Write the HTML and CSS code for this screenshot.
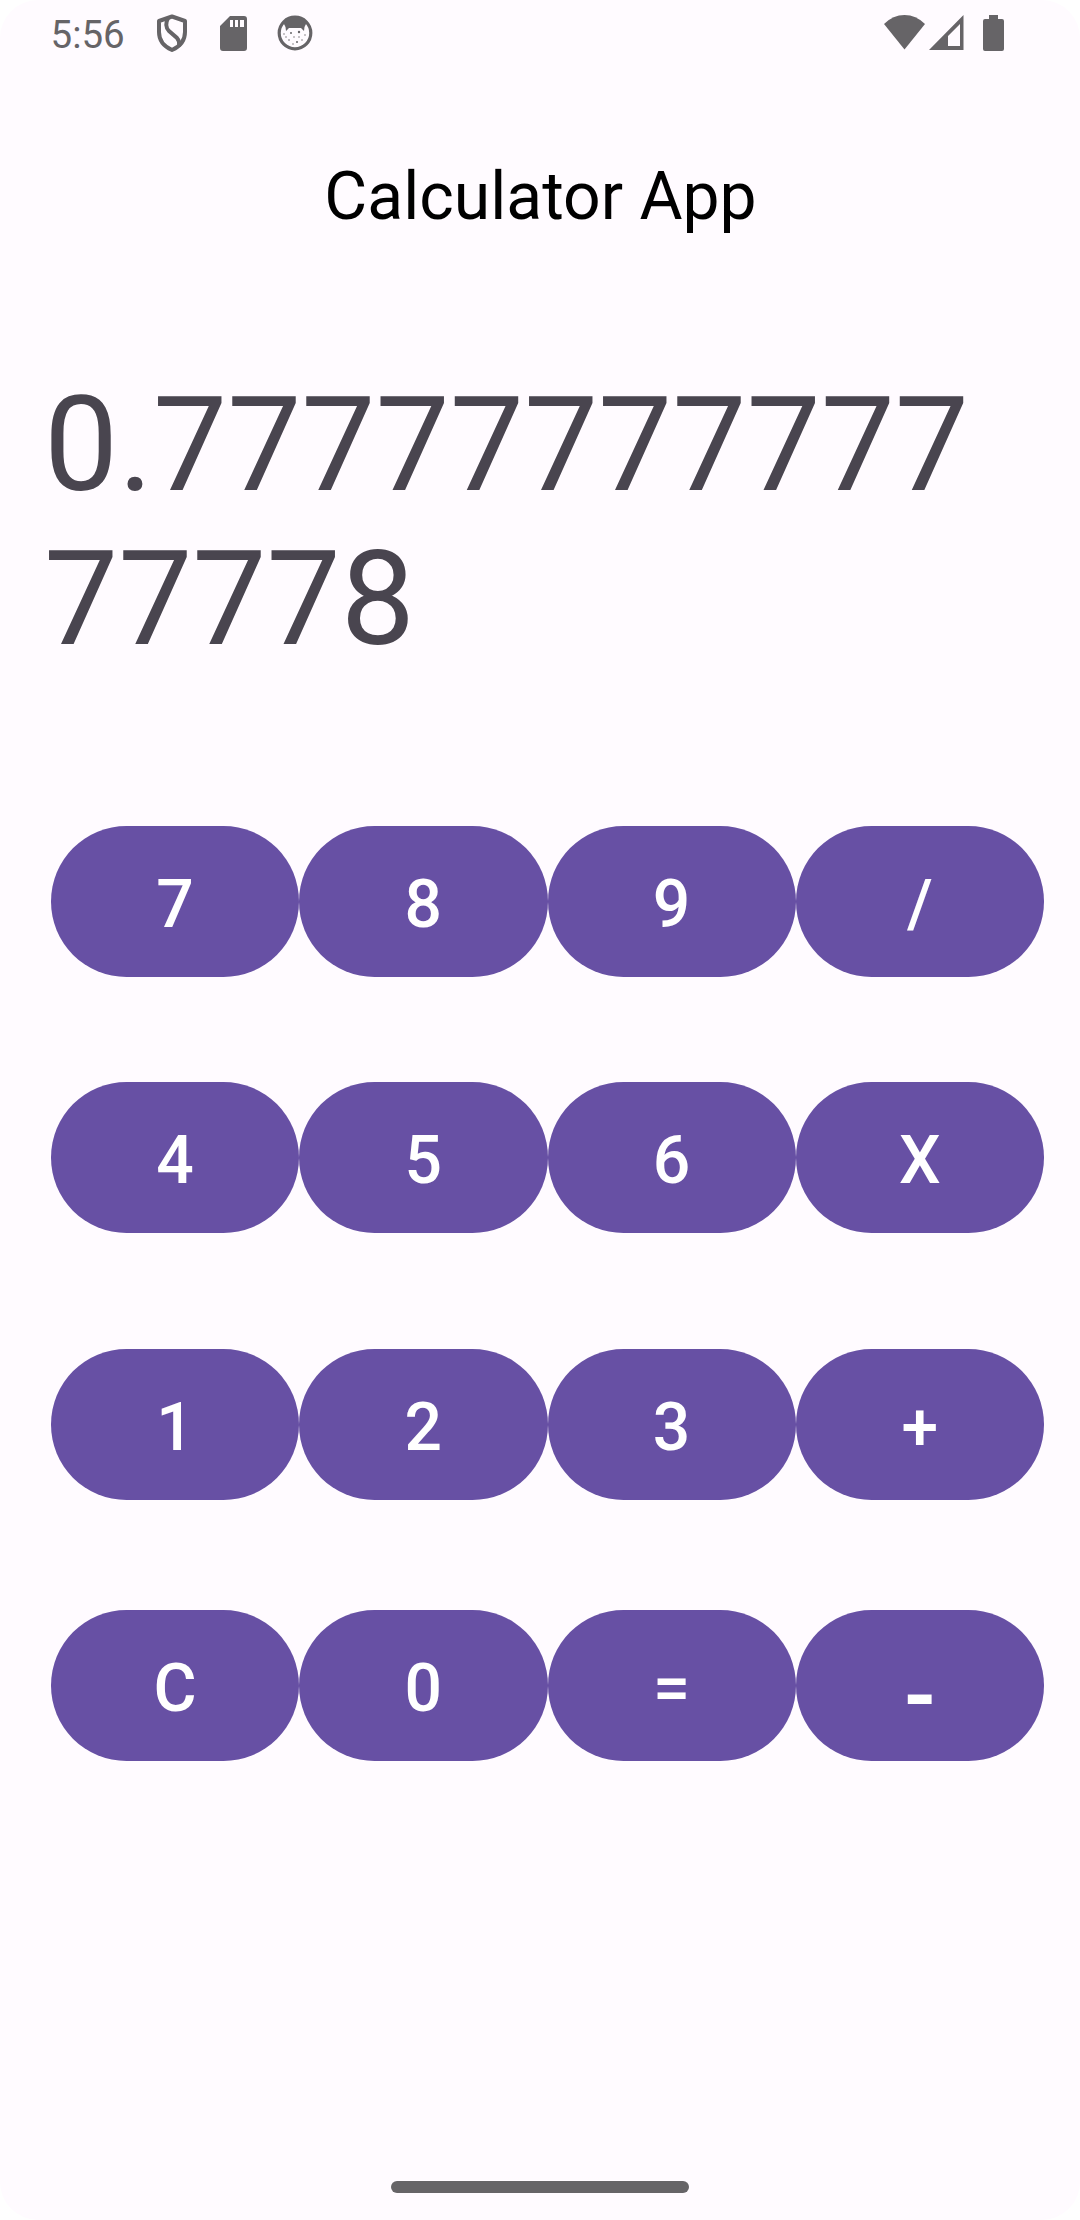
FILE: index.html
```html
<!DOCTYPE html>
<html lang="en">
<head>
<meta charset="utf-8">
<title>Calculator App</title>
<link rel="stylesheet" href="styles.css">
</head>
<body>
<div class="screen">
  <header class="status">
    <span class="time">5:56</span>
    <svg class="shield" width="32" height="38" viewBox="0 0 32 38"><path d="M16 2.500 29 7v11c0 8.500-5 14.500-13 18C8 32.500 3 26.500 3 18V7Z" fill="none" stroke="currentColor" stroke-width="4" stroke-linejoin="round"/><path d="M12 4C9.500 9 10 14 13 17l8 7c2.500 3 3 5 2 8" fill="none" stroke="currentColor" stroke-width="4"/></svg>
    <svg class="card" width="27" height="35" viewBox="0 0 27 35"><path fill="currentColor" fill-rule="evenodd" d="M10 0h14a3 3 0 0 1 3 3v29a3 3 0 0 1-3 3H3a3 3 0 0 1-3-3V10ZM10 4v7h3V4Zm5 0v7h3V4Zm5 0v7h4V4Z"/></svg>
    <svg class="cat" width="36" height="36" viewBox="0 0 36 36"><circle cx="18" cy="18" r="15.800" fill="none" stroke="currentColor" stroke-width="3.200"/><path fill="currentColor" d="M6 7C10 3 14 2 18 2s8 1 12 5l-2.500 5-.5 4-3-3H12l-3 3-.5-4Z"/><g fill="currentColor"><circle cx="14" cy="18" r="1"/><circle cx="22" cy="17" r="1.200"/><circle cx="7" cy="19" r=".7"/><circle cx="28" cy="20" r=".7"/><circle cx="17" cy="22" r=".7"/><circle cx="12" cy="25" r=".8"/><circle cx="20" cy="27" r="1"/><circle cx="25" cy="25" r=".7"/><circle cx="16" cy="29" r=".7"/><circle cx="9" cy="22" r=".7"/><circle cx="22" cy="22" r=".7"/></g></svg>
    <svg class="wifi" width="42" height="35" viewBox="0 0 42 35"><path fill="currentColor" d="M0 9Q9 0 20.500 0T41 9L20.500 34.500Z"/></svg>
    <svg class="cell" width="35" height="35" viewBox="0 0 35 35"><path fill="currentColor" fill-rule="evenodd" d="M34.500 0v35H0ZM31 9 19 21v10h12Z"/></svg>
    <svg class="battery" width="21" height="36" viewBox="0 0 21 36"><path fill="currentColor" d="M6 0h9v4h4a2 2 0 0 1 2 2v28a2 2 0 0 1-2 2H2a2 2 0 0 1-2-2V6a2 2 0 0 1 2-2h4Z"/></svg>
  </header>
  <h1 class="title">Calculator App</h1>
  <output class="display">0.7777777777777778</output>
  <main class="pad">
    <div class="row"><button>7</button><button>8</button><button>9</button><button>/</button></div>
    <div class="row"><button>4</button><button>5</button><button>6</button><button>X</button></div>
    <div class="row"><button>1</button><button>2</button><button>3</button><button>+</button></div>
    <div class="row"><button>C</button><button>0</button><button>=</button><button class="minus">-</button></div>
  </main>
  <div class="handle"></div>
</div>
</body>
</html>
```
FILE: styles.css
```css
body {
  margin: 0;
  background: #fff;
  font-family: Roboto, sans-serif;
}
.screen {
  box-sizing: border-box;
  width: 1080px;
  height: 2220px;
  display: flex;
  flex-direction: column;
  background: #fffbff;
  border-radius: 38px;
  overflow: hidden;
}
.status {
  height: 66px;
  display: flex;
  align-items: flex-start;
  color: #666467;
}
.status svg { display: block; flex: none; }
.time {
  width: 72px;
  margin: 12px 33px 0 50.500px;
  font-size: 38.500px;
  line-height: 45px;
}
.shield { margin-top: 14px; }
.card { margin: 16px 0 0 32px; }
.cat { margin: 15px 0 0 30px; }
.wifi { margin: 15px 0 0 571.500px; }
.cell { margin: 15px 0 0 3px; }
.battery { margin: 15px 0 0 19px; }
.title {
  margin: 92px 0 0;
  text-align: center;
  text-indent: 1px;
  font-size: 66px;
  line-height: 78px;
  font-weight: 400;
  color: #000;
}
.display {
  display: block;
  width: 960px;
  height: 308px;
  margin: 132px 0 0 44px;
  font-size: 132px;
  line-height: 154px;
  word-break: break-all;
  color: #49454f;
}
.pad {
  margin: 150px 36px 0 51px;
  display: flex;
  flex-direction: column;
}
.row {
  display: grid;
  grid-template-columns: repeat(4, 1fr);
  height: 151px;
}
.row:nth-child(2) { margin-top: 105px; }
.row:nth-child(3) { margin-top: 116px; }
.row:nth-child(4) { margin-top: 110px; }
button {
  border: 0;
  padding: 7px 0 0;
  border-radius: 76px;
  background: #6750a4;
  color: #fff;
  font: 500 66px/78px Roboto, sans-serif;
}
.minus {
  padding-top: 20px;
  font-size: 86px;
  font-weight: 700;
}
.handle {
  width: 298px;
  height: 12px;
  margin: auto auto 27px;
  border-radius: 6px;
  background: #666467;
}
```
